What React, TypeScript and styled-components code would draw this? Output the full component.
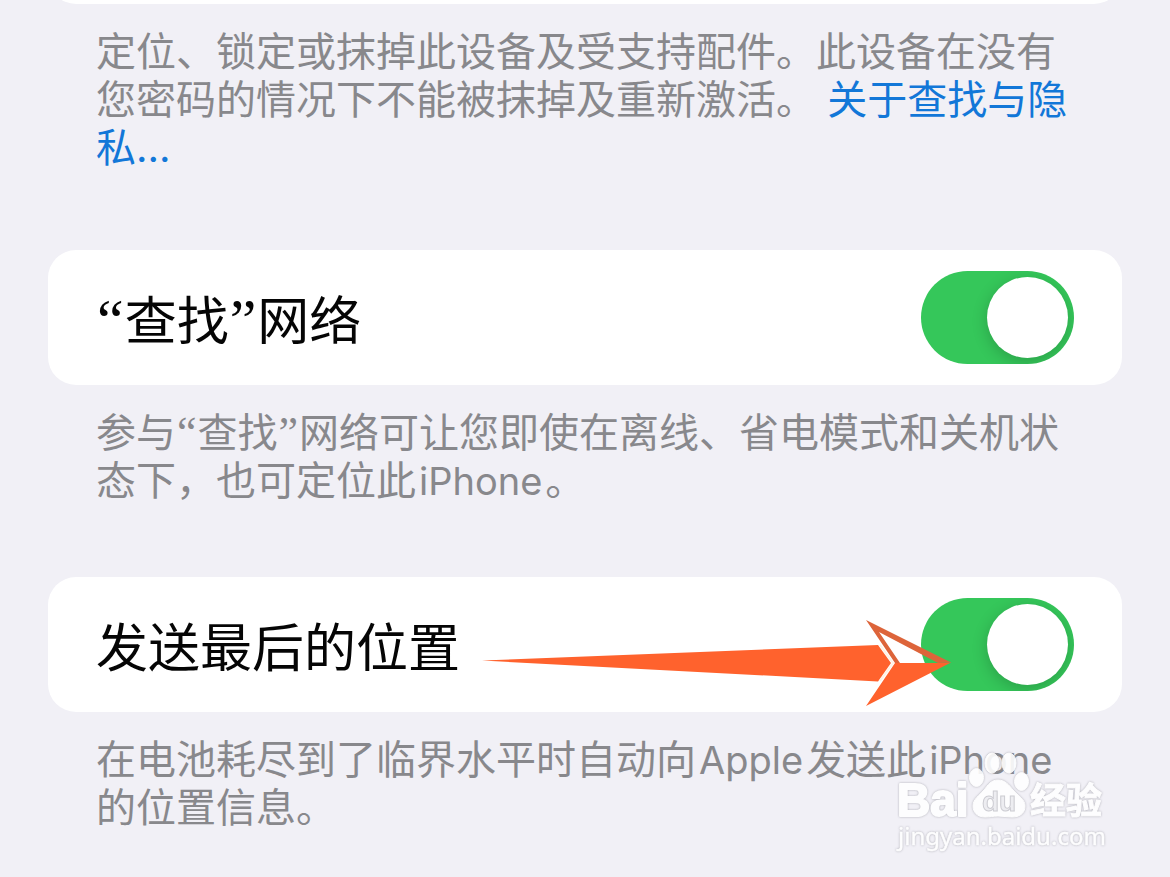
import React, { useState } from "react";
import styled, { createGlobalStyle } from "styled-components";

const GlobalStyle = createGlobalStyle`
  *, *::before, *::after { box-sizing: border-box; }
  body {
    margin: 0;
    background: #f1f0f6;
    overflow-x: hidden;
  }
`;

const Page = styled.main`
  display: flex;
  flex-direction: column;
  min-height: 100vh;
  padding: 0 48px;
  overflow: hidden;
  position: relative;
  background: #f1f0f6;
  color: #050505;
  font-family: Inter, "Noto Sans CJK SC", sans-serif;
`;

const PreviousCard = styled.div`
  height: 56px;
  flex: none;
  margin-top: -52px;
  border-radius: 28px;
  background: #ffffff;
`;

const Card = styled.div`
  position: relative;
  border-radius: 28px;
  background: #ffffff;
`;

const Row = styled.div`
  display: flex;
  align-items: center;
  justify-content: space-between;
  min-height: 135px;
  padding: 0 48px;
`;

const RowLabel = styled.label`
  padding-top: 8px;
  font-size: 52px;
  line-height: 64px;
`;

const Footnote = styled.p<{ $gap: number }>`
  margin: 0;
  padding: 24px 48px ${(p) => p.$gap}px;
  color: #88888c;
  font-size: 40px;
  line-height: 48px;
`;

const Quote = styled.span<{ $size: number }>`
  margin: 0 1px;
  font-family: "Liberation Serif", serif;
  font-size: ${(p) => p.$size}px;
  line-height: 0;
`;

const Latin = styled.span`
  margin: 0 3px;
  font-size: 38px;
`;

const MoreLink = styled.a`
  color: #1277d8;
  text-decoration: none;
`;

const Switch = styled.input`
  appearance: none;
  flex: none;
  width: 153px;
  height: 93px;
  margin: 0;
  padding: 6px;
  display: flex;
  justify-content: flex-start;
  overflow: hidden;
  border-radius: 47px;
  background: #e4e4e8;
  cursor: pointer;

  &::before {
    content: "";
    width: 81px;
    height: 81px;
    border-radius: 50%;
    background: #ffffff;
    box-shadow: 0 4px 16px rgba(0, 0, 0, 0.2);
  }

  &:checked {
    justify-content: flex-end;
    background: #35c75a;
  }
`;

const Pointer = styled.svg`
  position: absolute;
  top: 41px;
  right: 170px;
  width: 470px;
  height: 90px;
  pointer-events: none;
`;

const Watermark = styled.svg`
  position: absolute;
  right: 60px;
  top: 748px;
  width: 220px;
  height: 108px;
  opacity: 0.9;
  pointer-events: none;
`;

const MarkShapes = styled.g`
  fill: #ffffff;
  stroke: #ffffff;
  stroke-linejoin: round;
  filter: drop-shadow(0 0 1px #a8a8b0);
`;

function Arrow() {
  return (
    <Pointer viewBox="482 618 470 90" aria-hidden="true">
      <path d="M482 660.5 878 645 891 663 878 681.5Z" fill="#ff622d" />
      <path d="M895 663H938L951 662.5 866 706Z" fill="#ff622d" />
      <path d="M866 620 951 662.5 938 663 879 632 900 663H895Z" fill="#dd643a" />
      <path d="M880 645 893 663 880 681" fill="none" stroke="#fff3e6" strokeWidth="2" />
    </Pointer>
  );
}

function BaiduMark() {
  return (
    <Watermark viewBox="890 748 220 108" aria-label="Baidu 经验 jingyan.baidu.com">
      <MarkShapes>
        <ellipse cx="976.5" cy="777.5" rx="7" ry="9" />
        <ellipse cx="992" cy="763" rx="7" ry="10" />
        <ellipse cx="1009" cy="763" rx="7" ry="10" />
        <ellipse cx="1021.5" cy="781.5" rx="7" ry="9" />
        <path d="M998 780C1005 780 1009 785 1013 790C1018 796 1025 799 1025 806C1025 814 1019 817 1012 817C1007 817 1003 816 998 816C993 816 990 817 985 817C977 817 973 812 973 806C973 799 979 796 984 790C988 785 991 780 998 780Z" />
        <text
          x="897"
          y="816"
          strokeWidth="2"
          fontFamily="Liberation Sans, sans-serif"
          fontWeight="700"
          fontSize="46"
        >
          Bai
        </text>
        <text
          x="1030"
          y="814"
          fontFamily="Noto Sans CJK SC, sans-serif"
          fontWeight="700"
          fontSize="36"
        >
          经验
        </text>
        <text
          x="898"
          y="845"
          strokeWidth="0.5"
          fontFamily="Noto Sans, sans-serif"
          fontSize="24"
        >
          jingyan.baidu.com
        </text>
      </MarkShapes>
      <text
        x="982"
        y="811"
        fill="#ededf1"
        stroke="#c9c9cf"
        fontFamily="Liberation Sans, sans-serif"
        fontWeight="700"
        fontSize="28"
      >
        du
      </text>
    </Watermark>
  );
}

export default function App() {
  const [network, setNetwork] = useState(true);
  const [lastLocation, setLastLocation] = useState(true);

  return (
    <>
      <GlobalStyle />
      <Page lang="zh-CN">
        <PreviousCard />
        <Footnote $gap={78}>
          定位、锁定或抹掉此设备及受支持配件。此设备在没有您密码的情况下不能被抹掉及重新激活。{" "}
          <MoreLink href="#privacy">关于查找与隐私...</MoreLink>
        </Footnote>

        <Card>
          <Row>
            <RowLabel htmlFor="network">
              <Quote $size={60}>“</Quote>查找<Quote $size={60}>”</Quote>网络
            </RowLabel>
            <Switch
              id="network"
              type="checkbox"
              role="switch"
              checked={network}
              onChange={(e) => setNetwork(e.target.checked)}
            />
          </Row>
        </Card>
        <Footnote $gap={72}>
          参与<Quote $size={44}>“</Quote>查找<Quote $size={44}>”</Quote>
          网络可让您即使在离线、省电模式和关机状态下，也可定位此<Latin>iPhone</Latin>。
        </Footnote>

        <Card>
          <Row>
            <RowLabel htmlFor="last-location">发送最后的位置</RowLabel>
            <Switch
              id="last-location"
              type="checkbox"
              role="switch"
              checked={lastLocation}
              onChange={(e) => setLastLocation(e.target.checked)}
            />
          </Row>
          <Arrow />
        </Card>
        <Footnote $gap={24}>
          在电池耗尽到了临界水平时自动向<Latin>Apple</Latin>发送此<Latin>iPhone</Latin>的位置信息。
        </Footnote>
        <BaiduMark />
      </Page>
    </>
  );
}
